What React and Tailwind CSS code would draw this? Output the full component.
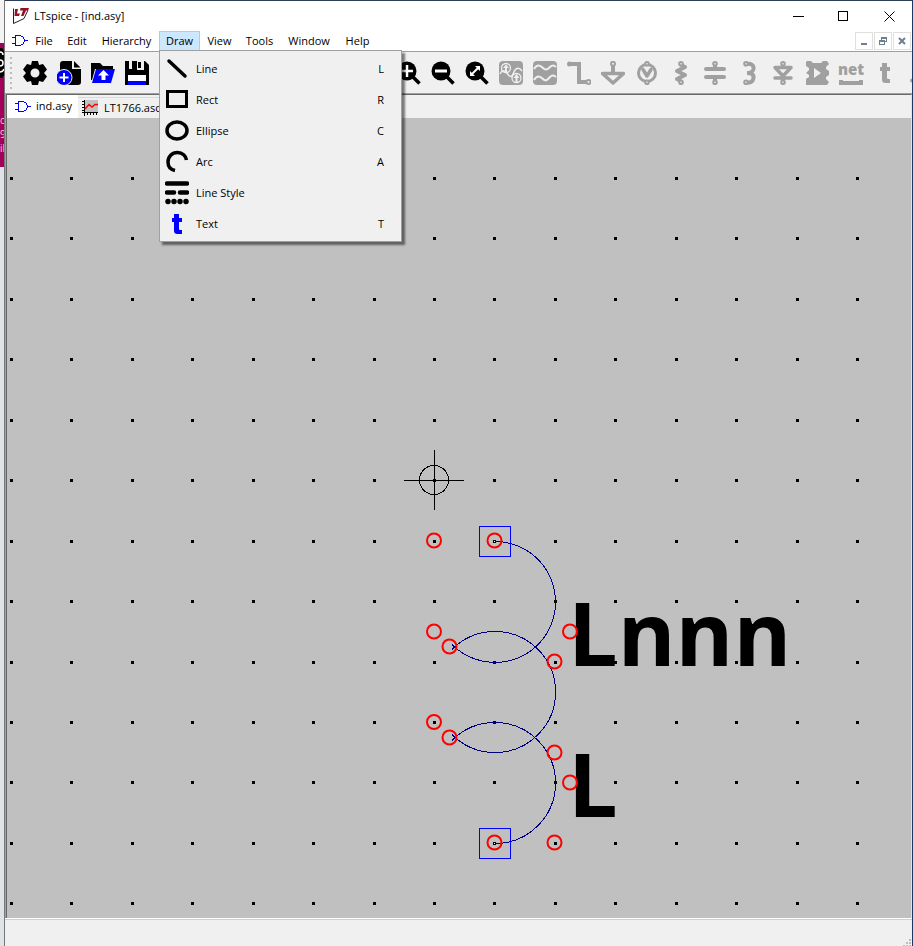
import React, { useState } from 'react';

const MENUS = [
  { name: 'File', width: 'w-8' },
  { name: 'Edit', width: 'w-[34px]' },
  { name: 'Hierarchy', width: 'w-[65px]' },
  { name: 'Draw', width: 'w-[41px]' },
  { name: 'View', width: 'w-[39px]' },
  { name: 'Tools', width: 'w-[41px]' },
  { name: 'Window', width: 'w-[58px]' },
  { name: 'Help', width: 'w-[39px]' },
];

const Icon = ({ children, className = '' }) => (
  <svg width="24" height="24" viewBox="0 0 24 24" fill="none" stroke="currentColor" className={`shrink-0 ${className}`} aria-hidden="true">
    {children}
  </svg>
);

const GateIcon = () => (
  <svg width="16" height="12" viewBox="0 0 16 12" fill="none" stroke="#0000ff" shapeRendering="crispEdges" className="shrink-0" aria-hidden="true">
    <path d="M3.5 0.5H8.5L11 2L12.5 4.5V6.5L11 9L8.5 10.5H3.5ZM0 2.5H3M0 8.5H3M13 5.5H16" />
  </svg>
);

const WaveformIcon = () => (
  <svg width="18" height="16" viewBox="0 0 18 16" fill="none" className="shrink-0" aria-hidden="true">
    <rect x="3" y="0" width="13" height="12" fill="#c0c0c0" />
    <path d="M2.5 0V16M0 12.5H16M0 1.5H3M0 4.5H3M0 7.5H3M0 10.5H3M5.5 12V15M8.5 12V15M11.5 12V15M14.5 12V15" stroke="#000" shapeRendering="crispEdges" />
    <path d="M3 9L7 4.500L10 7L13 4.500H16" stroke="#ff0000" strokeWidth="1.5" />
  </svg>
);

const TextGlyph = ({ className }) => (
  <svg width="24" height="24" viewBox="0 0 24 24" fill="currentColor" className={`shrink-0 ${className}`} aria-hidden="true">
    <path d="M9 2H14V6H17V10H14V17C14 18 15 18 17 18V22H13C10 22 9 21 9 18V10H7V6H9Z" />
  </svg>
);

const Lens = ({ children }) => (
  <Icon>
    <circle cx="10" cy="10" r="9.5" fill="#000" stroke="none" />
    <path d="M16 16L22.5 22.5" stroke="#000" strokeWidth="3.5" />
    <g stroke="#fff" strokeWidth="2.5">{children}</g>
  </Icon>
);

const DRAW_ITEMS = [
  { label: 'Line', shortcut: 'L', icon: <Icon><path d="M4 4L20 19" strokeWidth="3.500" strokeLinecap="round" /></Icon> },
  { label: 'Rect', shortcut: 'R', icon: <Icon><rect x="2.5" y="3.5" width="19" height="15" strokeWidth="3" /></Icon> },
  { label: 'Ellipse', shortcut: 'C', icon: <Icon><ellipse cx="12" cy="11.5" rx="10" ry="8.5" strokeWidth="3.500" /></Icon> },
  { label: 'Arc', shortcut: 'A', icon: <Icon><path d="M10 20.500C5.500 19.500 3 16.500 3 12C3 6.500 7 2.500 12.500 2.500C17.500 2.500 21 6 21.500 10" strokeWidth="3.500" /></Icon> },
  {
    label: 'Line Style',
    icon: (
      <Icon>
        <path d="M2 2.500H22M2 11.500H9M15 11.500H22" strokeWidth="4.500" strokeLinecap="round" />
        <path d="M3 20.500H3.010M9 20.500H9.010M15 20.500H15.010M21 20.500H21.010" strokeWidth="5.500" strokeLinecap="round" />
      </Icon>
    ),
  },
  { label: 'Text', shortcut: 'T', icon: <TextGlyph className="text-[#0000ff]" /> },
];

const FILE_TOOLS = [
  {
    name: 'Settings',
    icon: (
      <Icon>
        <path fillRule="evenodd" fill="#000" stroke="none" d="M9 0H15L16 4L20 3L24 8.500L21 12L24 15.500L20 21L16 20L15 24H9L8 20L4 21L0 15.500L3 12L0 8.500L4 3L8 4ZM12 7.500A4.500 4.500 0 1 0 12 16.500A4.500 4.500 0 1 0 12 7.500Z" />
      </Icon>
    ),
  },
  {
    name: 'New Schematic',
    icon: (
      <Icon>
        <path d="M6 0H15V8H24V21Q24 24 21 24H6Q3 24 3 21V3Q3 0 6 0ZM17 0L23.500 6.500H17Z" fill="#000" stroke="none" />
        <circle cx="7" cy="16.500" r="8" fill="#0000ff" stroke="#efefef" />
        <path d="M7 12V21M2.500 16.500H11.500" stroke="#fff" strokeWidth="2" />
      </Icon>
    ),
  },
  {
    name: 'Open',
    icon: (
      <Icon>
        <path d="M0 2H9L12 5H22V8H4L1 19H0Z" fill="#000" stroke="none" />
        <path d="M5 8H24L20 22H1Z" fill="#0000ff" stroke="none" />
        <path d="M12.500 9L18 14.500H14.500V19H10.500V14.500H7Z" fill="#fff" stroke="none" />
      </Icon>
    ),
  },
  {
    name: 'Save',
    icon: (
      <Icon>
        <path d="M0 0H20L24 4V24H0Z" fill="#000" stroke="none" />
        <path d="M4 0H7V8H4ZM12 0H19V9H12Z" fill="#efefef" stroke="none" />
        <path d="M13 1H16V7H13ZM7 0H12V9H7Z" fill="#000" stroke="none" />
        <path d="M3 14H21V21H3Z" fill="#fff" stroke="none" />
        <path d="M3 20H21V24H3Z" fill="#0000ff" stroke="none" />
      </Icon>
    ),
  },
];

const VIEW_TOOLS = [
  { name: 'Zoom In', icon: <Lens><path d="M10 4V16M4 10H16" /></Lens> },
  { name: 'Zoom Out', icon: <Lens><path d="M4 10H16" strokeWidth="3" /></Lens> },
  {
    name: 'Zoom to Fit',
    icon: (
      <Lens>
        <path d="M6 14L14 6" strokeWidth="2" />
        <path d="M10 5H15V10ZM5 10V15H10Z" fill="#fff" stroke="none" />
      </Lens>
    ),
  },
];

const PART_TOOLS = [
  {
    name: 'Autorange',
    icon: (
      <Icon>
        <rect width="24" height="24" rx="4" fill="currentColor" stroke="none" />
        <path d="M1 13C3 9 5 9 7.500 11.500C10 15 12 18 14.500 12C17 6 20 6 23 10" stroke="#efefef" strokeWidth="1.500" />
        <circle cx="7" cy="7" r="4.500" stroke="#efefef" strokeWidth="1.300" />
        <circle cx="17.500" cy="17" r="4.500" stroke="#efefef" strokeWidth="1.300" />
        <path d="M7 3.500L10 7H8V11H6V7H4ZM17.500 13L20.500 17H18.500V21H16.500V17H14.500Z" fill="#efefef" stroke="none" />
      </Icon>
    ),
  },
  {
    name: 'Waveforms',
    icon: (
      <Icon>
        <rect width="24" height="24" rx="4" fill="currentColor" stroke="none" />
        <path d="M1 8C4 3 7 4 10 7C13 10 15 8 17 6C19 4 21 4 23 6M1 19C4 14 7 15 10 18C13 21 15 18 17 16C19 14 21 14 23 16" stroke="#efefef" strokeWidth="2" />
      </Icon>
    ),
  },
  {
    name: 'Wire',
    icon: (
      <Icon>
        <path d="M3 3H12V21H19" strokeWidth="4" />
        <circle cx="2.500" cy="3" r="2.500" fill="currentColor" stroke="none" />
        <circle cx="21.500" cy="21" r="2" fill="#efefef" strokeWidth="2" />
      </Icon>
    ),
  },
  {
    name: 'Ground',
    icon: (
      <Icon>
        <path d="M1.500 12.500H22.500L12 22Z" strokeWidth="3.500" strokeLinejoin="round" />
        <path d="M12 5V12" strokeWidth="4" />
        <circle cx="12" cy="2.800" r="2" fill="#efefef" strokeWidth="2" />
      </Icon>
    ),
  },
  {
    name: 'Voltage Source',
    icon: (
      <Icon>
        <circle cx="12" cy="12" r="8.500" strokeWidth="3" />
        <path d="M8 8.500L12 15L16 8.500" strokeWidth="3.500" strokeLinejoin="round" strokeLinecap="round" />
        <circle cx="12" cy="2.800" r="1.800" fill="#efefef" strokeWidth="2" />
        <circle cx="12" cy="21.200" r="1.800" fill="#efefef" strokeWidth="2" />
      </Icon>
    ),
  },
  {
    name: 'Resistor',
    icon: (
      <Icon>
        <path d="M12 4L16 6L8 10L16 14L8 18L12 20" strokeWidth="4" strokeLinejoin="round" />
        <circle cx="12" cy="2.800" r="1.800" fill="#efefef" strokeWidth="2" />
        <circle cx="12" cy="21.200" r="1.800" fill="#efefef" strokeWidth="2" />
      </Icon>
    ),
  },
  {
    name: 'Capacitor',
    icon: (
      <Icon>
        <path d="M3 8H21M3 16H21" strokeWidth="4" strokeLinecap="round" />
        <path d="M12 5V8M12 16V19" strokeWidth="4" />
        <circle cx="12" cy="2.800" r="1.800" fill="#efefef" strokeWidth="2" />
        <circle cx="12" cy="21.200" r="1.800" fill="#efefef" strokeWidth="2" />
      </Icon>
    ),
  },
  {
    name: 'Inductor',
    icon: (
      <Icon>
        <path d="M9 3C14 2 17 4 16.500 8C16 11 12 12 10 12C15 12 17 14 16.500 17C16 21 13 22 9 21.500" strokeWidth="4" />
        <circle cx="9" cy="2.800" r="1.800" fill="#efefef" strokeWidth="2" />
        <circle cx="9" cy="21.200" r="1.800" fill="#efefef" strokeWidth="2" />
      </Icon>
    ),
  },
  {
    name: 'Diode',
    icon: (
      <Icon>
        <path d="M4 6.500H20L12 15ZM4 17H20" strokeWidth="3.500" strokeLinecap="round" strokeLinejoin="round" />
        <path d="M12 17V20" strokeWidth="4" />
        <circle cx="12" cy="2.800" r="1.800" fill="#efefef" strokeWidth="2" />
        <circle cx="12" cy="21.200" r="1.800" fill="#efefef" strokeWidth="2" />
      </Icon>
    ),
  },
  {
    name: 'Component',
    icon: (
      <Icon>
        <path fillRule="evenodd" fill="currentColor" stroke="none" d="M2 0H6L8 2H16L18 0H22L24 3L21 6V8L24 10V14L21 16V18L24 21L22 24H1V18L4 16V14L1 12L4 9V7L1 5V1ZM9 7V17L16 12Z" />
      </Icon>
    ),
  },
];

const NetIcon = () => (
  <span className="relative flex h-6 w-6 justify-center">
    <span className="-mt-[2px] font-[Open_Sans,sans-serif] text-[15px] leading-[20px] font-extrabold">net</span>
    <svg width="24" height="7" viewBox="0 0 24 7" className="absolute -bottom-px left-0" fill="currentColor" aria-hidden="true">
      <path d="M2 2H22V6H2ZM0 1H4V6H0ZM20 1H24V6H20Z" />
    </svg>
  </span>
);

const ToolButton = ({ name, children, muted }) => (
  <button type="button" title={name} aria-label={name} className={`flex h-8 w-[34px] shrink-0 items-center justify-center ${muted ? 'text-[#a0a0a0]' : 'text-black'}`}>
    {children}
  </button>
);

const TitleBar = () => (
  <header className="flex h-[31px] items-center border-t border-[#2b3d59] bg-white pl-2">
    <svg width="17" height="17" viewBox="0 0 17 17" fill="none" className="shrink-0" aria-hidden="true">
      <path d="M0.500 0.500V15.500L8 12L11 10.500L15 2" stroke="#222" fill="#fff" />
      <path d="M2 1H5L4 5.500H7L6 8H1.500ZM7.500 0H16L15 2.500H13L10.500 8H8L10 2.500H7Z" fill="#8f1420" />
    </svg>
    <h1 className="ml-1 flex-1 text-[11px]">LTspice - [ind.asy]</h1>
    <button type="button" aria-label="Minimize" className="flex h-full w-[46px] items-center justify-center">
      <svg width="11" height="11" viewBox="0 0 11 11" stroke="#000" shapeRendering="crispEdges"><path d="M0 5.500H11" /></svg>
    </button>
    <button type="button" aria-label="Maximize" className="flex h-full w-[45px] items-center justify-center">
      <svg width="11" height="11" viewBox="0 0 11 11" fill="none" stroke="#000" shapeRendering="crispEdges"><path d="M0.500 0.500H9.500V9.500H0.500Z" /></svg>
    </button>
    <button type="button" aria-label="Close" className="flex h-full w-[46px] items-center justify-center">
      <svg width="11" height="11" viewBox="0 0 11 11" stroke="#000"><path d="M0.500 0.500L10.500 10.500M10.500 0.500L0.500 10.500" /></svg>
    </button>
  </header>
);

const DrawMenu = () => (
  <ul role="menu" className="absolute top-full left-0 z-10 -mt-px w-[243px] border border-[#a0a0a0] bg-[#f0f0f0] py-[2px] shadow-[3px_3px_2px_rgba(0,0,0,0.5)]">
    {DRAW_ITEMS.map(item => (
      <li key={item.label} role="none">
        <button type="button" role="menuitem" className="flex h-[31px] w-full items-center pr-[17px] pl-[5px] text-left">
          {item.icon}
          <span className="ml-[7px] flex-1 pt-px">{item.label}</span>
          <span className="pt-px">{item.shortcut}</span>
        </button>
      </li>
    ))}
  </ul>
);

const MenuBar = () => {
  const [open, setOpen] = useState('Draw');

  return (
    <nav className="flex h-5 items-center bg-white pr-px pl-[7px]">
      <GateIcon />
      <div className="flex h-5 flex-1">
        {MENUS.map(menu => (
          <div key={menu.name} className={`relative h-5 shrink-0 ${menu.width}`}>
            <button
              type="button"
              aria-haspopup="menu"
              onClick={() => setOpen(open === menu.name ? '' : menu.name)}
              className={`h-5 w-full border leading-[18px] ${open === menu.name ? 'border-[#99d1ff] bg-[#cce8ff]' : 'border-transparent'}`}
            >
              {menu.name}
            </button>
            {menu.name === 'Draw' && open === 'Draw' && <DrawMenu />}
          </div>
        ))}
      </div>
      <div className="flex gap-px text-[#6d7f90]">
        <button type="button" aria-label="Minimize document" className="flex size-[18px] items-center justify-center border border-[#e0e0e0]">
          <svg width="10" height="10" viewBox="0 0 10 10" fill="currentColor"><path d="M2 7H8V9H2Z" /></svg>
        </button>
        <button type="button" aria-label="Restore document" className="flex size-[18px] items-center justify-center border border-[#e0e0e0]">
          <svg width="10" height="10" viewBox="0 0 10 10" fill="none" stroke="currentColor" shapeRendering="crispEdges">
            <path d="M3.500 4V1.500H8.500V5.500H7M3 2.500H9M1.500 4.500H6.500V8.500H1.500ZM1 5.500H7" />
          </svg>
        </button>
        <button type="button" aria-label="Close document" className="flex size-[18px] items-center justify-center border border-[#e0e0e0]">
          <svg width="10" height="10" viewBox="0 0 10 10" stroke="currentColor" strokeWidth="2"><path d="M2 2L8 8M8 2L2 8" /></svg>
        </button>
      </div>
    </nav>
  );
};

const ToolBar = () => (
  <div role="toolbar" className="flex h-[42px] items-center overflow-hidden border-t border-[#a0a0a0] bg-[#f0f0f0] pl-[5px]">
    <svg width="3" height="32" className="mr-[5px] shrink-0" aria-hidden="true">
      {[0, 5, 10, 15, 20, 25, 30].map(y => <rect key={y} y={y} width="2" height="2" fill="#bcbcbc" />)}
    </svg>
    {FILE_TOOLS.map(tool => <ToolButton key={tool.name} name={tool.name}>{tool.icon}</ToolButton>)}
    {/* Simulation buttons */}
    <div className="w-[238px] shrink-0" />
    {VIEW_TOOLS.map(tool => <ToolButton key={tool.name} name={tool.name}>{tool.icon}</ToolButton>)}
    {PART_TOOLS.map(tool => <ToolButton key={tool.name} name={tool.name} muted>{tool.icon}</ToolButton>)}
    <ToolButton name="Label Net" muted><NetIcon /></ToolButton>
    <ToolButton name="Text" muted><TextGlyph className="text-[#a0a0a0]" /></ToolButton>
    <ToolButton name="Directive" muted>
      <Icon><circle cx="5" cy="19.500" r="2" fill="currentColor" stroke="none" /></Icon>
    </ToolButton>
  </div>
);

const COLUMNS = Array.from({ length: 34 }, (_, i) => 3 + Math.round(i * 60.43));
const ROWS = Array.from({ length: 24 }, (_, i) => 59 + Math.round(i * 60.44));

const HANDLES = [
  [427, 422.5], [487.5, 422.5], [427, 513.5], [442.5, 528.5],
  [547.5, 543.5], [563, 513.5], [427, 604], [442.5, 619.5],
  [547.5, 634.5], [563, 664.5], [487.5, 724.5], [547.5, 724.5],
];

const SymbolCanvas = () => (
  <svg className="block min-h-0 w-full flex-1 bg-[#c0c0c0]" role="img" aria-label="Inductor symbol">
    <g shapeRendering="crispEdges">
      {ROWS.map(y => COLUMNS.map(x => <rect key={`${x}-${y}`} x={x} y={y} width="3" height="3" />))}
    </g>

    {/* Attribute text */}
    <g className="font-[Open_Sans,sans-serif] text-[88px] font-bold">
      <text x="561" y="548">Lnnn</text>
      <text x="561" y="699">L</text>
    </g>

    {/* Origin */}
    <g stroke="#000" fill="none" shapeRendering="crispEdges">
      <path d="M397 362.500H457M427.500 332V392" />
      <circle cx="427" cy="362" r="14.500" />
    </g>

    {/* Windings */}
    <g stroke="#000080" fill="none" shapeRendering="crispEdges">
      <path d="M488 423.500A60.500 60.500 0 1 1 445 526.500" />
      <path d="M445 531.500A60.500 60.500 0 1 1 445 616.500" />
      <path d="M445 622.500A60.500 60.500 0 0 1 488 604.500A60.500 60.500 0 0 1 488 725.500" />
    </g>

    {/* Pins */}
    <g stroke="#0000ff" fill="none" shapeRendering="crispEdges">
      <rect x="472.500" y="408.500" width="31" height="30" />
      <rect x="472.500" y="710.500" width="31" height="30" />
    </g>
    <rect x="487" y="423" width="1" height="1" fill="#fff" />
    <rect x="487" y="725" width="1" height="1" fill="#fff" />

    <g stroke="#ff0000" strokeWidth="2" fill="none">
      {HANDLES.map(([x, y]) => <circle key={`${x}-${y}`} cx={x} cy={y} r="7" />)}
    </g>
  </svg>
);

const App = () => (
  <div className="flex h-screen overflow-hidden bg-[#1f3a5f] font-[Open_Sans,Noto_Sans,sans-serif] text-[11px] text-black">
    {/* Edge of the window behind */}
    <div className="flex w-[5px] shrink-0 flex-col overflow-hidden border-r border-[#777] bg-[#dfe3e6]" aria-hidden="true">
      <div className="h-[43px] shrink-0 bg-[#f4f4f4]" />
      <div className="flex h-[124px] shrink-0 flex-col gap-[34px] overflow-hidden bg-[#a4005b]">
        <svg width="4" height="36" viewBox="0 0 4 36" fill="none" className="shrink-0">
          <path d="M0 5H2L4 8V32L2 35H0Z" fill="#000" />
          <path d="M0 9Q3 9 3 12M0 17Q3 17 3 20T0 23M0 29Q3 29 4 26" stroke="#fff" strokeWidth="1.500" />
        </svg>
        <div className="flex flex-col text-[10px] leading-[14px] text-[#f0c8de]">
          <span>o</span>
          <span>9</span>
          <span>il</span>
        </div>
      </div>
    </div>

    <main className="flex min-w-0 flex-1 flex-col bg-[#f0f0f0]">
      <TitleBar />
      <MenuBar />
      <ToolBar />
      <div className="flex min-h-0 flex-1 flex-col border-t border-l border-[#a0a0a0]">
        <div className="flex min-h-0 flex-1 flex-col border-t border-r border-b border-l border-t-[#696969] border-r-[#e3e3e3] border-b-[#e3e3e3] border-l-[#696969]">
          <div role="tablist" className="flex h-[23px] shrink-0">
            <button type="button" role="tab" aria-selected="true" className="flex w-[71px] items-center gap-[5px] bg-white pl-2">
              <GateIcon />
              ind.asy
            </button>
            <button type="button" role="tab" aria-selected="false" className="mt-[2px] flex w-[100px] items-center gap-1 border-t border-r border-[#d9d9d9] pl-1">
              <WaveformIcon />
              LT1766.asc
            </button>
          </div>
          <SymbolCanvas />
        </div>
      </div>
      <footer className="flex h-[27px] shrink-0 items-end justify-end border-t border-[#d0d0d0] shadow-[0_-1px_0_#fff]">
        <svg width="10" height="8" fill="#bcbcbc" aria-hidden="true">
          <path d="M7 1H9V3H7ZM4 4H6V6H4ZM7 4H9V6H7ZM1 7H3V8H1ZM4 7H6V8H4ZM7 7H9V8H7Z" />
        </svg>
      </footer>
    </main>
    <div className="w-px shrink-0 bg-[#1f3a5f]" />
  </div>
);

export default App;
